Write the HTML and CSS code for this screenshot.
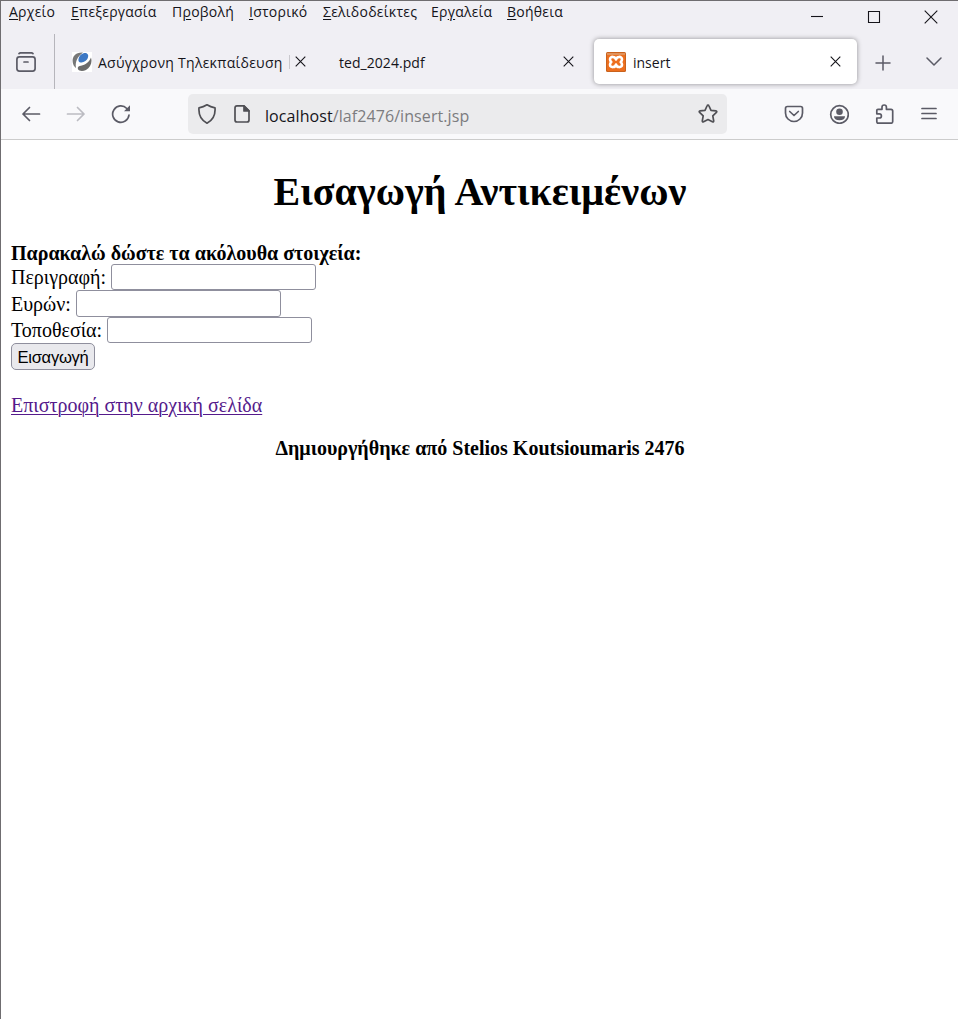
FILE: index.html
```html
<!DOCTYPE html>
<html lang="el">
<head>
<meta charset="utf-8">
<title>insert</title>
<link rel="stylesheet" href="styles.css">
</head>
<body>
<div class="window">
  <header class="titlebar">
    <nav class="menu">
      <span><u>Α</u>ρχείο</span><span><u>Ε</u>πεξεργασία</span><span>Π<u>ρ</u>οβολή</span><span><u>Ι</u>στορικό</span><span><u>Σ</u>ελιδοδείκτες</span><span>Ερ<u>γ</u>αλεία</span><span><u>Β</u>οήθεια</span>
    </nav>
    <div class="controls">
      <svg width="14" height="14"><path d="M1 6.500h12"/></svg>
      <svg width="14" height="14"><path d="M1.500 1.500h11v11h-11z"/></svg>
      <svg width="14" height="14"><path d="M.7 .7l12.600 12.600M13.300 .7L.7 13.300"/></svg>
    </div>
  </header>

  <div class="tabs">
    <div class="view">
      <svg class="icon" width="20" height="20" viewBox="0 0 20 20"><path d="M3 1.600Q3.400 .8 4.800 .8h10.400q1.400 0 1.800.8"/><rect x=".9" y="4.900" width="18.200" height="14.200" rx="2.500"/><path d="M8 10h4"/></svg>
    </div>
    <div class="tab first">
      <svg width="20" height="20" viewBox="0 0 20 20"><path fill="#fff" d="M0 0h20v20H0z"/><path fill="#777" d="M11 .5C4 0 0 4 .7 10c.3 2.500 1.300 4.500 3.300 6C3 10 5 5 11 .5z"/><path fill="#3d78c4" d="M11.500 1.200c3-.8 5.500.8 4.500 4.100-.8 3.300-4 4.700-6.500 5.200-2.300.3-3.500-1-3-3.500C7 4.500 8.500 2 11.500 1.200z"/><path fill="#6c6c6c" d="M19 5.500c1.500 5-.5 10-5 12.500-3.500 1.500-7 1-8-.8-.8-2 .5-3 3-3.500 4.500-1 8-3.200 10-8.200z"/></svg>
      <span class="label greek">Ασύγχρονη Τηλεκπαίδευση</span><i class="clip"></i>
      <svg class="close" width="11" height="11"><path d="M.7 .7l9.600 9.600M10.300 .7L.7 10.300"/></svg>
    </div>
    <div class="tab second">
      <span class="label pdf">ted_2024.pdf</span>
      <svg class="close" width="11" height="11"><path d="M.7 .7l9.600 9.600M10.300 .7L.7 10.300"/></svg>
    </div>
    <div class="tab active">
      <svg width="20" height="20" viewBox="0 0 20 20"><rect width="20" height="20" rx="1.500" fill="#c9621d"/><rect x="1" y="1" width="18" height="18" rx="1" fill="#ed6f1e"/><path d="M1 1h18v2H1z" fill="#df925c"/><path d="M10 7.500C9.500 4.200 4 4 4 7.300c0 1.300.5 2 1.300 2.700-.8.700-1.300 1.400-1.300 2.700 0 3.300 5.500 3.100 6-.2.500 3.300 6 3.500 6 .2 0-1.300-.5-2-1.300-2.700.8-.7 1.300-1.400 1.300-2.700 0-3.300-5.500-3.100-6 .2z" fill="none" stroke="#fff" stroke-width="2.600" stroke-linejoin="round"/></svg>
      <span class="label insert">insert</span>
      <svg class="close" width="11" height="11"><path d="M.7 .7l9.600 9.600M10.300 .7L.7 10.300"/></svg>
    </div>
    <svg class="icon plus" width="16" height="16"><path d="M8 1v14M1 8h14"/></svg>
    <svg class="icon down" width="16" height="10"><path d="M1 1l7 7 7-7"/></svg>
  </div>

  <div class="toolbar">
    <div class="history">
      <svg class="icon" width="20" height="20" viewBox="0 0 20 20"><path d="M18.500 10H2M8.500 3.500L2 10l6.500 6.500"/></svg>
      <svg class="icon off" width="20" height="20" viewBox="0 0 20 20"><path d="M1.500 10H18M11.500 3.500L18 10l-6.500 6.500"/></svg>
      <svg class="icon" width="20" height="20" viewBox="0 0 20 20"><path d="M18 11A8.200 8.200 0 1 1 15.800 4.500"/><path d="M19 1.200v6h-6z" fill="#5b5b66" stroke="none"/></svg>
    </div>
    <div class="urlbar">
      <svg class="icon dark" width="20" height="20" viewBox="0 0 20 20"><path d="M10 .8Q13.500 3 18 3.900C18.500 10 17.500 15.500 10 19.200 2.500 15.500 1.500 10 2 3.900 6.500 3 10 .8 10 .8z"/></svg>
      <svg class="icon dark page" width="18" height="20" viewBox="0 0 18 20"><path d="M4 1.900h7l5 5V16q0 2-2 2H4q-2 0-2-2V4q0-2.100 2-2.100z"/><path d="M11 2v5H16z" fill="#4f4f54"/></svg>
      <span class="address"><b>localhost</b>/laf2476/insert.jsp</span>
      <svg class="icon dark star" width="20" height="20" viewBox="0 0 20 20"><path d="M10 1.200q.7 0 1 .8l2 4.300 4.900.6q1.500.3.500 1.500l-3.600 3.500.9 4.900q.1 1.600-1.300 1L10 15.500l-4.400 2.300q-1.400.6-1.300-1l.9-4.900L1.600 8.400q-1-1.200.5-1.500L7 6.300 9 2q.3-.8 1-.8z"/></svg>
    </div>
    <div class="actions">
      <svg class="icon" width="20" height="20" viewBox="0 0 20 20"><path d="M3.400 2.500h13.200q1.900 0 1.900 1.900V9a8.500 8.500 0 0 1-17 0V4.400q0-1.900 1.900-1.900z"/><path d="M5.700 7.500l4.300 4 4.300-4"/></svg>
      <svg class="icon" width="20" height="20" viewBox="0 0 20 20"><circle cx="10.500" cy="10.500" r="8.800"/><circle cx="10.500" cy="7.700" r="3.300" fill="#5b5b66" stroke="none"/><path d="M5 12.300h11q0 3.900-5.500 3.900t-5.500-3.900z" fill="#5b5b66" stroke="none"/></svg>
      <svg class="icon" width="20" height="20" viewBox="0 0 20 20"><path d="M4 5.300H8V3.200a2.200 2.200 0 0 1 4.400 0V5.300H17q1.700 0 1.700 1.700v10.500q0 1.700-1.700 1.700H4.500q-1.700 0-1.700-1.700V14h2.500a2.100 2.100 0 0 0 0-4.200h-2.500V6.500Q2.800 5.300 4 5.300z"/></svg>
      <svg class="icon" width="20" height="20" viewBox="0 0 20 20"><path d="M3 4.500h14M3 9.500h14M3 14.500h14"/></svg>
    </div>
  </div>

  <main class="content">
    <h1>Εισαγωγή Αντικειμένων</h1>
    <form>
      <strong class="intro">Παρακαλώ δώστε τα ακόλουθα στοιχεία:</strong>
      <label class="field">Περιγραφή: <input type="text"></label>
      <label class="field mid">Ευρών: <input type="text"></label>
      <label class="field">Τοποθεσία: <input type="text"></label>
      <button type="button">Εισαγωγή</button>
    </form>
    <a href="#">Επιστροφή στην αρχική σελίδα</a>
    <p class="credit">Δημιουργήθηκε από Stelios Koutsioumaris 2476</p>
  </main>
</div>
</body>
</html>
```
FILE: styles.css
```css
* { box-sizing: border-box; }
body { margin: 0; background: #fff; overflow: hidden; }
svg { display: block; flex: none; }
.window {
  height: 1019px;
  border-top: 1px solid #6f6d70;
  border-left: 1px solid #6f6d70;
  font-family: "Open Sans", "Noto Sans", sans-serif;
  color: #15141a;
}
.titlebar { display: flex; justify-content: space-between; height: 33px; background: #f0eff4; }
.menu {
  display: grid;
  grid-template-columns: 62px 101px 77px 74px 108px 76px 80px;
  padding-left: 8px;
  font-size: 14px;
  letter-spacing: .25px;
  line-height: 22px;
  white-space: nowrap;
}
.menu u { text-underline-offset: 2px; }
.controls { display: flex; gap: 43px; padding: 9px 20px 0 0; }
.controls path, .close path { fill: none; stroke: #15141a; stroke-width: 1.1; }
.tabs { display: flex; height: 55px; background: #f0eff4; }
.icon { fill: none; stroke: #5b5b66; stroke-width: 1.7; stroke-linecap: round; stroke-linejoin: round; }
.icon.dark { stroke: #4f4f54; }
.icon.off { stroke: #bcbcc2; }
.view { width: 54px; padding: 18px 0 0 15px; border-right: 1px solid #b6b5bb; }
.tab { display: flex; align-items: center; height: 45px; margin-top: 5px; font-size: 14px; white-space: nowrap; }
.tab .close { margin-left: auto; }
.label { padding-top: 2px; }
.first { width: 270px; padding: 0 19px 0 17px; }
.first .label { margin-left: 6px; letter-spacing: .27px; }
.clip { width: 1px; height: 14px; margin-left: 6px; background: #c9c8cd; }
.second { width: 262px; padding: 0 13px 0 14px; }
.pdf { letter-spacing: .05px; }
.active { width: 263px; margin-left: 7px; padding: 0 16px 0 12px; border-radius: 5px; background: #fff; box-shadow: 0 0 5px rgba(0, 0, 0, .4); }
.active .label { margin-left: 7px; }
.plus { margin: 21px 0 0 18px; stroke-width: 1.5; }
.down { margin: 23px 0 0 35px; stroke-width: 1.5; }
.toolbar { display: flex; align-items: center; height: 51px; background: #f9f9fb; border-bottom: 1px solid #ccc; }
.history { display: flex; gap: 25px; width: 187px; padding-left: 20px; }
.urlbar { display: flex; align-items: center; width: 539px; height: 40px; padding: 0 9px; border-radius: 5px; background: #ebebed; }
.page { margin-left: 16px; }
.address { margin-left: 14px; padding-top: 4px; font-size: 16px; letter-spacing: .08px; color: #7c7c7f; white-space: nowrap; }
.address b { font-weight: 400; color: #15141a; }
.star { margin-left: auto; }
.actions { display: flex; gap: 25px; margin-left: 57px; }
.content { padding: 0 9px 0 10px; font-family: "Liberation Serif", serif; font-size: 20px; color: #000; }
h1 { margin: 29px 0 26px; font-size: 40px; letter-spacing: .07px; line-height: 46px; text-align: center; }
form { display: flex; flex-direction: column; align-items: flex-start; }
.intro { height: 23px; line-height: 24px; white-space: nowrap; }
.field { display: flex; align-items: center; gap: 5px; height: 26px; line-height: 26px; white-space: nowrap; }
.mid { height: 27px; }
.field input { width: 205px; height: 26px; border: 1px solid #8f8f9d; border-radius: 3px; background: #fff; }
.mid input { height: 27px; }
button { width: 84px; height: 27px; padding: 2px 0 0; border: 1px solid #8f8f9d; border-radius: 5px; background: #e9e9ed; font: 16.600px "Liberation Sans", Arial, sans-serif; letter-spacing: -.3px; color: #000; white-space: nowrap; }
.content a { display: block; width: max-content; margin-top: 23px; line-height: 24px; color: #551a8b; text-underline-offset: 2px; text-decoration-thickness: 1px; }
.credit { margin: 19px 0 0; line-height: 24px; font-weight: 700; text-align: center; }
```
